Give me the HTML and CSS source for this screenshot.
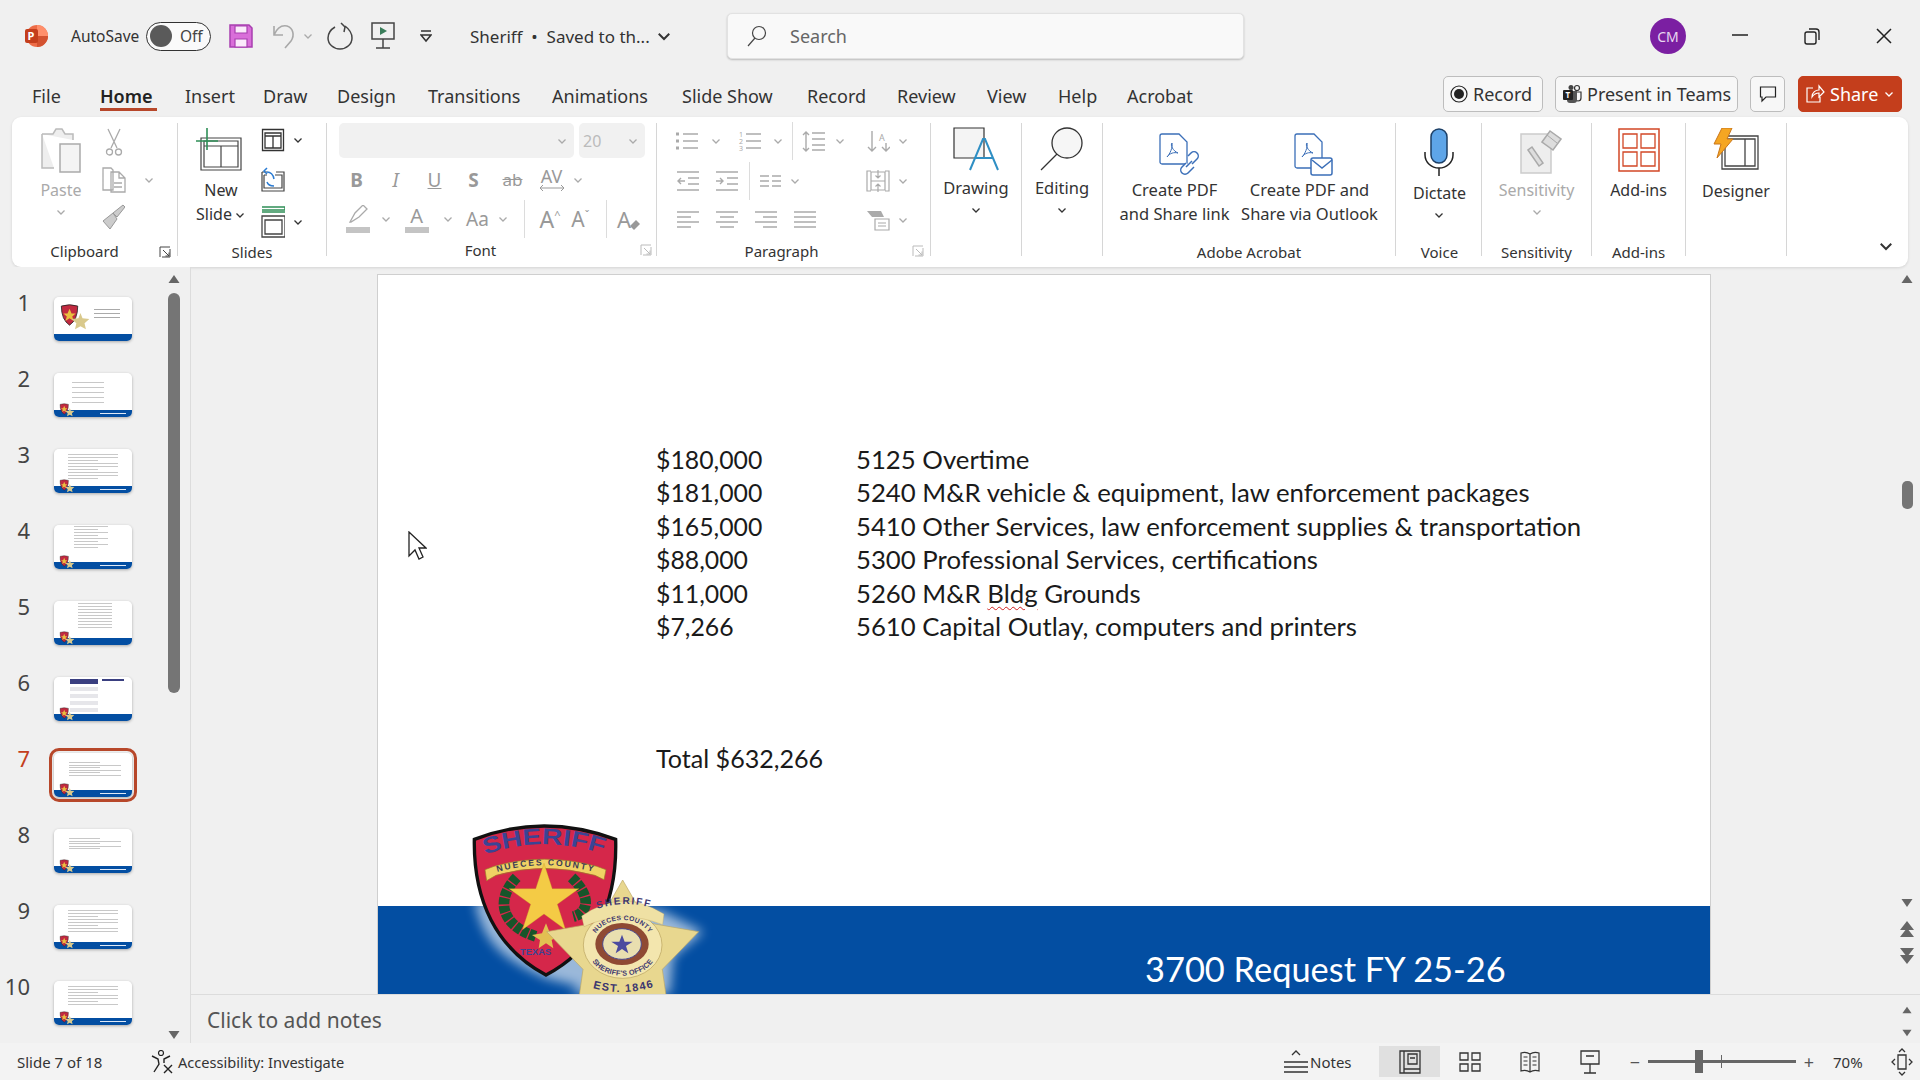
FILE: index.html
```html
<!DOCTYPE html>
<html lang="en">
<head>
<meta charset="utf-8">
<title>Sheriff - PowerPoint</title>
<link rel="stylesheet" href="styles.css">
</head>
<body>
<svg class="defs" aria-hidden="true">
  <symbol id="chev" viewBox="0 0 12 12"><path d="M2.5 4.5 6 8l3.5-3.5" fill="none" stroke="currentColor" stroke-width="1.3"/></symbol>
  <symbol id="launch" viewBox="0 0 12 12"><path d="M1 11V1h10M11 3v8H3M4 4l6 6M6.500 10H10V6.500" fill="none" stroke="currentColor" stroke-width="1"/></symbol>
  <symbol id="bullets" viewBox="0 0 24 24"><g fill="none" stroke="currentColor" stroke-width="1.500"><path d="M8 5h15M8 12h15M8 19h15"/><path d="M1 5h3M1 12h3M1 19h3" stroke-width="3"/></g></symbol>
  <symbol id="linesp" viewBox="0 0 24 24"><path d="M10 4h13M10 10h13M10 16h13M10 21h13M4 3v19M1 6l3-3 3 3M1 19l3 3 3-3" fill="none" stroke="currentColor" stroke-width="1.400"/></symbol>
  <symbol id="outdent" viewBox="0 0 24 24"><path d="M1 3h22M12 9h11M12 15h11M1 21h22M9 12H2M5 9l-3 3 3 3" fill="none" stroke="currentColor" stroke-width="1.400"/></symbol>
  <symbol id="indent" viewBox="0 0 24 24"><path d="M1 3h22M12 9h11M12 15h11M1 21h22M1 12h7M5 9l3 3-3 3" fill="none" stroke="currentColor" stroke-width="1.400"/></symbol>
  <symbol id="cols" viewBox="0 0 24 24"><path d="M2 7h9M14 7h9M2 12h9M14 12h9M2 17h9M14 17h9" fill="none" stroke="currentColor" stroke-width="1.400"/></symbol>
  <symbol id="aligntext" viewBox="0 0 24 24"><path d="M5 2H1v20h4M19 2h4v20h-4M5 3h14v18H5zM12 1v8M9.500 6.500 12 9l2.500-2.500M12 23v-8M9.500 17.500 12 15l2.500 2.500M5 12h14" fill="none" stroke="currentColor" stroke-width="1.200"/></symbol>
  <symbol id="smart" viewBox="0 0 24 24"><path d="M1 3h14l3 6H6z" fill="currentColor"/><path d="M9 11h14v11H9zM12 15h8M12 18h8" fill="#fff" stroke="currentColor" stroke-width="1.200"/></symbol>
  <symbol id="al" viewBox="0 0 24 24"><path d="M1 4h22M1 9h14M1 14h22M1 19h14" fill="none" stroke="currentColor" stroke-width="1.500"/></symbol>
  <symbol id="ac" viewBox="0 0 24 24"><path d="M1 4h22M5 9h14M1 14h22M5 19h14" fill="none" stroke="currentColor" stroke-width="1.500"/></symbol>
  <symbol id="ar" viewBox="0 0 24 24"><path d="M1 4h22M9 9h14M1 14h22M9 19h14" fill="none" stroke="currentColor" stroke-width="1.500"/></symbol>
  <symbol id="aj" viewBox="0 0 24 24"><path d="M1 4h22M1 9h22M1 14h22M1 19h22" fill="none" stroke="currentColor" stroke-width="1.500"/></symbol>
  <symbol id="up" viewBox="0 0 12 12"><path d="M6 2 11.500 10H.5z" fill="currentColor"/></symbol>
  <symbol id="down" viewBox="0 0 12 12"><path d="M6 10 11.500 2H.5z" fill="currentColor"/></symbol>
  <symbol id="layout" viewBox="0 0 24 24"><path d="M1.500 1.500h21v21h-21zM4 5h16v15H4zM4 8h16M12 8v12" fill="none" stroke="currentColor" stroke-width="1.300"/></symbol>
  <symbol id="mini" viewBox="0 0 22 20">
    <path d="M1 2Q7 0 13 2 13 12 7 16 1 12 1 2Z" fill="#c22a40" stroke="#222" stroke-width=".6"/>
    <path d="M7 4l1.500 3.500h3l-2.500 2.200 1 3.300L7 11l-3 2 1-3.300-2.500-2.200h3z" fill="#e9bf3f"/>
    <path d="M15 7l1.500 4 5 .5-3.500 3 1 4.500-4-2.300L11 19l1-4.500-3.500-3 5-.5z" fill="#d9c98c"/>
  </symbol>
</svg>

<div class="app">
  <header class="titlebar">
    <svg class="t-logo" width="24" height="24" viewBox="0 0 24 24"><circle cx="13" cy="12" r="11" fill="#ed6c47"/><path d="M13 1a11 11 0 0 1 11 11H13z" fill="#ff8f6b"/><path d="M13 12h11a11 11 0 0 1-11 11z" fill="#d35230"/><rect x="1" y="5" width="13" height="14" rx="2" fill="#c43e1c"/><text x="3.500" y="16" font-size="11" font-weight="700" fill="#fff" font-family="Noto Sans">P</text></svg>
    <span class="t-autosave">AutoSave</span>
    <span class="toggle"><i class="knob"></i><b class="toggle-text">Off</b></span>
    <svg class="t-save" width="24" height="24" viewBox="0 0 24 24"><path d="M1 1h19l3 3v19H1z" fill="#d96ed9" stroke="#a83fb0" stroke-width="1.500"/><path d="M6 2h12v7H6zM6 15h12v8H6z" fill="#fbeafb" stroke="#a83fb0" stroke-width="1.200"/></svg>
    <svg class="t-undo" width="24" height="26" viewBox="0 0 24 26"><path d="M2 3v9h9M2 12C5 5 10 2 15 3c6 2 8 9 4 15l-6 7" fill="none" stroke="#a8a8a8" stroke-width="1.600"/></svg>
    <svg class="t-chev c-dis" width="12" height="12"><use href="#chev"/></svg>
    <svg class="t-redo" width="26" height="28" viewBox="0 0 26 28"><path d="M8 5C3 8 1 12 1 16a12 11 0 0 0 24 0c0-5-3-9-7-12M14 1l4 4-1 5" fill="none" stroke="#444" stroke-width="1.500"/></svg>
    <svg class="t-present" width="24" height="28" viewBox="0 0 24 28"><path d="M1 1h22v16H1zM12 17v9M5 26h14" fill="none" stroke="#444" stroke-width="1.500"/><path d="M9 5l7 4-7 4z" fill="#3a7d5a"/></svg>
    <svg class="t-qat" width="12" height="14" viewBox="0 0 12 14"><path d="M1 2h10M1 6h10L6 12z" fill="none" stroke="#333" stroke-width="1.500"/></svg>
    <span class="t-doc">Sheriff&nbsp; •&nbsp; Saved to th...</span>
    <svg class="t-docchev" width="18" height="18" viewBox="0 0 12 12"><use href="#chev"/></svg>
    <div class="search">
      <svg width="20" height="22" viewBox="0 0 20 22"><circle cx="12" cy="8" r="6.500" fill="none" stroke="#444" stroke-width="1.200"/><path d="M8 13 1 21" stroke="#444" stroke-width="1.200"/></svg>
      <span class="search-text">Search</span>
    </div>
    <span class="avatar">CM</span>
    <svg class="t-min" width="18" height="18" viewBox="0 0 18 18"><path d="M1 8h16" stroke="#222" stroke-width="1.500"/></svg>
    <svg class="t-rest" width="18" height="18" viewBox="0 0 18 18"><rect x="2" y="5" width="11" height="12" rx="2" fill="none" stroke="#222" stroke-width="1.400"/><path d="M6 2h7a3 3 0 0 1 3 3v8" fill="none" stroke="#222" stroke-width="1.400"/></svg>
    <svg class="t-close" width="18" height="18" viewBox="0 0 18 18"><path d="M2 2l14 14M16 2 2 16" stroke="#222" stroke-width="1.500"/></svg>
  </header>

  <nav class="tabs">
    <div class="tablist">
      <span class="tab">File</span>
      <span class="tab tab-on">Home</span>
      <span class="tab">Insert</span>
      <span class="tab">Draw</span>
      <span class="tab">Design</span>
      <span class="tab">Transitions</span>
      <span class="tab">Animations</span>
      <span class="tab">Slide Show</span>
      <span class="tab">Record</span>
      <span class="tab">Review</span>
      <span class="tab">View</span>
      <span class="tab">Help</span>
      <span class="tab">Acrobat</span>
    </div>
    <div class="actions">
      <span class="act act-rec"><svg width="18" height="18" viewBox="0 0 18 18"><circle cx="9" cy="9" r="8" fill="none" stroke="#222" stroke-width="1.200"/><circle cx="9" cy="9" r="5" fill="#222"/></svg>Record</span>
      <span class="act act-teams"><svg width="20" height="20" viewBox="0 0 20 20"><circle cx="15" cy="4" r="2.500" fill="none" stroke="#333" stroke-width="1.200"/><circle cx="9" cy="3.500" r="2.500" fill="#444"/><path d="M13 8h6v6a3 3 0 0 1-6 0z" fill="none" stroke="#333" stroke-width="1.200"/><path d="M5 7h10v9a3 3 0 0 1-3 3H8a3 3 0 0 1-3-3z" fill="#555"/><rect x="1" y="6" width="10" height="10" rx="1" fill="#222"/><text x="3.500" y="14" font-size="8" font-weight="700" fill="#fff" font-family="Noto Sans">T</text></svg>Present in Teams</span>
      <span class="act act-cmt"><svg width="18" height="18" viewBox="0 0 18 18"><path d="M1.500 2h15v10H7l-4 4v-4H1.500z" fill="none" stroke="#222" stroke-width="1.200"/></svg></span>
      <span class="act act-share"><svg width="20" height="20" viewBox="0 0 20 20"><path d="M8 4H2v14h13v-5M7 13c0-5 4-7 7-7V2l5 6-5 5V9c-3 0-5 1-7 4z" fill="none" stroke="#fff" stroke-width="1.200"/></svg>Share<svg class="share-chev" width="12" height="12"><use href="#chev"/></svg></span>
    </div>
  </nav>

  <section class="ribbon">
    <div class="group g-clip">
      <div class="body">
        <div class="big big-paste dis">
          <svg width="42" height="46" viewBox="0 0 42 46"><path d="M2 6h11l3-5h6l3 5h8v6M2 6v34h12" fill="#eee" stroke="#bbb" stroke-width="1.500"/><rect x="20" y="16" width="20" height="28" fill="#f4f4f4" stroke="#aaa" stroke-width="1.500"/></svg>
          <span class="big-label">Paste</span>
          <svg class="big-chev" width="12" height="12"><use href="#chev"/></svg>
        </div>
        <div class="stack dis">
          <svg class="ico-cut" width="18" height="28" viewBox="0 0 18 28"><path d="M3 1l9 19M15 1 6 20" fill="none" stroke="currentColor" stroke-width="1.300"/><circle cx="4.500" cy="24" r="3" fill="none" stroke="currentColor" stroke-width="1.300"/><circle cx="13.500" cy="24" r="3" fill="none" stroke="currentColor" stroke-width="1.300"/></svg>
          <div class="stack-row"><svg width="26" height="28" viewBox="0 0 26 28"><path d="M2 2h8l2 2v20H2zM10 6h8l6 6v14H10zM18 6v6h6M13 17h8M13 21h8" fill="#fff" stroke="currentColor" stroke-width="1.300"/></svg><svg class="sm-chev" width="12" height="12"><use href="#chev"/></svg></div>
          <svg width="24" height="26" viewBox="0 0 24 26"><path d="M22 1l2 2-8 10-4-4zM12 9 2 17l7 8 7-10z" fill="#ccc" stroke="#999" stroke-width="1"/></svg>
        </div>
      </div>
      <div class="glabel with-launch lbl-clip"><span>Clipboard</span><svg class="launch launch-dark" width="12" height="12"><use href="#launch"/></svg></div>
    </div>

    <div class="group g-slides">
      <div class="body">
        <div class="big big-new">
          <svg class="ico-new" width="46" height="44" viewBox="0 0 46 44"><path d="M5 11h40v32H5zM8 14h34v26H8zM8 19h34M25 19v21" fill="#fff" stroke="#444" stroke-width="1.200"/><path d="M11 1v22M0 14h22" stroke="#2f8f57" stroke-width="1.600"/></svg>
          <span class="big-label">New<br>Slide<svg class="inline-chev" width="12" height="12"><use href="#chev"/></svg></span>
        </div>
        <div class="stack stack-slides">
          <div class="stack-row"><svg width="24" height="24"><use href="#layout"/></svg><svg class="sm-chev" width="12" height="12"><use href="#chev"/></svg></div>
          <svg width="24" height="26" viewBox="0 0 24 26"><path d="M1 6h5M15 6h8v19H1V6M3 9h3M14 9h7v13H3V9" fill="none" stroke="#444" stroke-width="1.200"/><path d="M13 13C12 8 9 6 6 6M6 2 3 5l3 3M6 16c1 3 4 4 7 4" fill="none" stroke="#2b7cd3" stroke-width="1.500"/></svg>
          <div class="stack-row"><svg width="24" height="32" viewBox="0 0 24 32"><path d="M1 1h23v3H1M1 6h23" fill="none" stroke="#2f8f57" stroke-width="1.500"/><path d="M1 10h23v21H1zM4 14h17v14H4z" fill="none" stroke="#444" stroke-width="1.300"/></svg><svg class="sm-chev" width="12" height="12"><use href="#chev"/></svg></div>
        </div>
      </div>
      <div class="glabel">Slides</div>
    </div>

    <div class="group g-font dis">
      <div class="font-boxes"><span class="fbox fname"><svg width="12" height="12"><use href="#chev"/></svg></span><span class="fbox fsize"><i class="fsize-val">20</i><svg width="12" height="12"><use href="#chev"/></svg></span></div>
      <div class="fmt-row fmt-2">
        <b class="fch fch-b">B</b><i class="fch">I</i><u class="fch">U</u><b class="fch fch-s">S</b><s class="fch fch-ab">ab</s>
        <span class="fch fch-av">AV<svg width="26" height="8" viewBox="0 0 26 8"><path d="M1 4h24M4 1 1 4l3 3M22 1l3 3-3 3" fill="none" stroke="currentColor"/></svg></span>
        <svg width="12" height="12"><use href="#chev"/></svg>
      </div>
      <div class="fmt-row fmt-3">
        <span class="swatch"><svg width="24" height="18" viewBox="0 0 24 18"><path d="M4 17 9 8l8-8 4 4-8 8-8 5z" fill="none" stroke="currentColor" stroke-width="1.300"/></svg><i class="bar"></i></span>
        <svg width="12" height="12"><use href="#chev"/></svg>
        <span class="swatch"><span class="fa">A</span><i class="bar"></i></span>
        <svg width="12" height="12"><use href="#chev"/></svg>
        <span class="fch-aa">Aa</span>
        <svg width="12" height="12"><use href="#chev"/></svg>
        <i class="vsep"></i>
        <span class="fch-grow">A<sup>^</sup></span>
        <span class="fch-shrink">A<sup>ˇ</sup></span>
        <i class="vsep"></i>
        <span class="fch-clear">A<svg class="eraser" width="12" height="12" viewBox="0 0 12 12"><path d="M1 7l6-6 4 4-6 6z" fill="currentColor"/></svg></span>
      </div>
      <div class="glabel with-launch lbl-font"><span>Font</span><svg class="launch" width="12" height="12"><use href="#launch"/></svg></div>
    </div>

    <div class="group g-para dis">
      <div class="para-row para-1">
        <div class="p-left pl-1">
          <svg width="24" height="24"><use href="#bullets"/></svg>
          <svg width="12" height="12"><use href="#chev"/></svg>
          <svg width="24" height="24" viewBox="0 0 24 24"><path d="M9 5h15M9 12h15M9 19h15" fill="none" stroke="currentColor" stroke-width="1.500"/><g fill="currentColor" font-size="7" font-family="Noto Sans"><text x="2" y="8">1</text><text x="2" y="15">2</text><text x="2" y="22">3</text></g></svg>
          <svg width="12" height="12"><use href="#chev"/></svg>
          <i class="vsep"></i>
          <svg width="24" height="24"><use href="#linesp"/></svg>
          <svg width="12" height="12"><use href="#chev"/></svg>
        </div>
        <div class="p-right">
          <svg width="24" height="24" viewBox="0 0 24 24"><path d="M6 2v20M2 18l4 4 4-4M20 14v8M16 18l4 4 4-4" fill="none" stroke="currentColor" stroke-width="1.400"/><text x="13" y="12" font-size="9" fill="currentColor" font-family="Noto Sans">A</text></svg>
          <svg width="12" height="12"><use href="#chev"/></svg>
        </div>
      </div>
      <div class="para-row para-2">
        <div class="p-left pl-2">
          <svg width="24" height="24"><use href="#outdent"/></svg>
          <svg width="24" height="24"><use href="#indent"/></svg>
          <i class="vsep"></i>
          <svg width="24" height="24"><use href="#cols"/></svg>
          <svg width="12" height="12"><use href="#chev"/></svg>
        </div>
        <div class="p-right">
          <svg width="24" height="24"><use href="#aligntext"/></svg>
          <svg width="12" height="12"><use href="#chev"/></svg>
        </div>
      </div>
      <div class="para-row para-3">
        <div class="p-left pl-3">
          <svg width="24" height="24"><use href="#al"/></svg>
          <svg width="24" height="24"><use href="#ac"/></svg>
          <svg width="24" height="24"><use href="#ar"/></svg>
          <svg width="24" height="24"><use href="#aj"/></svg>
        </div>
        <div class="p-right">
          <svg width="26" height="24"><use href="#smart"/></svg>
          <svg width="12" height="12"><use href="#chev"/></svg>
        </div>
      </div>
      <div class="glabel with-launch lbl-para"><span>Paragraph</span><svg class="launch" width="12" height="12"><use href="#launch"/></svg></div>
    </div>

    <div class="group g-draw">
      <div class="body center">
        <div class="big big-draw">
          <svg width="46" height="44" viewBox="0 0 46 44"><path d="M1 1h30v30H1z" fill="#f4f4f4" stroke="#333" stroke-width="1.200"/><path d="M17 43 30 12h2l13 31M22 31h18" fill="none" stroke="#2f8fc4" stroke-width="2"/></svg>
          <span class="big-label">Drawing</span>
          <svg class="big-chev" width="12" height="12"><use href="#chev"/></svg>
        </div>
      </div>
    </div>

    <div class="group g-edit">
      <div class="body center">
        <div class="big big-draw">
          <svg width="46" height="44" viewBox="0 0 46 44"><circle cx="28" cy="16" r="15" fill="#f6f6f6" stroke="#333" stroke-width="1.300"/><path d="M18 27 2 43" stroke="#333" stroke-width="1.300"/></svg>
          <span class="big-label">Editing</span>
          <svg class="big-chev" width="12" height="12"><use href="#chev"/></svg>
        </div>
      </div>
    </div>

    <div class="group g-acro">
      <div class="body acro-body">
        <div class="big big-acro">
          <svg class="ico-acro" width="40" height="44" viewBox="0 0 40 44"><path d="M3 1h17l8 8v22H3a2 2 0 0 1-2-2V3a2 2 0 0 1 2-2z" fill="#fff" stroke="#3b6fb8" stroke-width="1.300"/><path d="M8 24c3-3 6-10 5-14-2 2 1 8 6 10-4-1-8 0-11 4z" fill="none" stroke="#3b6fb8"/><path d="M29 23l3-3a4 4 0 0 1 6 6l-5 5M27 30l-4 4a4 4 0 0 0 6 6l6-6M27 34l6-6" fill="#fff" stroke="#3b6fb8" stroke-width="1.500"/></svg>
          <span class="big-label">Create PDF<br>and Share link</span>
        </div>
        <div class="big big-acro">
          <svg class="ico-acro" width="40" height="44" viewBox="0 0 40 44"><path d="M3 1h17l8 8v26H3a2 2 0 0 1-2-2V3a2 2 0 0 1 2-2z" fill="#fff" stroke="#3b6fb8" stroke-width="1.300"/><path d="M8 24c3-3 6-10 5-14-2 2 1 8 6 10-4-1-8 0-11 4z" fill="none" stroke="#3b6fb8"/><rect x="17" y="25" width="21" height="17" rx="2" fill="#fff" stroke="#3b6fb8" stroke-width="1.500"/><path d="M18 27l10 8 10-8" fill="none" stroke="#3b6fb8" stroke-width="1.500"/></svg>
          <span class="big-label">Create PDF and<br>Share via Outlook</span>
        </div>
      </div>
      <div class="glabel">Adobe Acrobat</div>
    </div>

    <div class="group g-voice">
      <div class="body center">
        <div class="big big-voice">
          <svg width="30" height="48" viewBox="0 0 30 48"><rect x="7" y="1" width="16" height="34" rx="8" fill="#5ea5e8" stroke="#1c3f66" stroke-width="1.500"/><path d="M1 24v3a14 13 0 0 0 28 0v-3M15 40v8" fill="none" stroke="#222" stroke-width="1.500"/></svg>
          <span class="big-label">Dictate</span>
          <svg class="big-chev" width="12" height="12"><use href="#chev"/></svg>
        </div>
      </div>
      <div class="glabel">Voice</div>
    </div>

    <div class="group g-sens">
      <div class="body center">
        <div class="big big-sens dis">
          <svg class="ico-sens" width="42" height="46" viewBox="0 0 42 46"><path d="M1 6h30v39H1z" fill="#eee" stroke="#ccc" stroke-width="1.500"/><path d="M8 22 19 38l4-3L12 19zM22 14 30 3l11 8-8 11z" fill="#ddd" stroke="#aaa" stroke-width="1.500"/><path d="M27 7l10 8" stroke="#aaa"/></svg>
          <span class="big-label">Sensitivity</span>
          <svg class="big-chev" width="12" height="12"><use href="#chev"/></svg>
        </div>
      </div>
      <div class="glabel">Sensitivity</div>
    </div>

    <div class="group g-add">
      <div class="body center">
        <div class="big big-add">
          <svg width="42" height="44" viewBox="0 0 42 44"><path d="M1 1h40v42H1z" fill="#fff" stroke="#d24726" stroke-width="1.500"/><path d="M5 6h14v14H5zM23 6h14v14H23zM5 24h14v14H5zM23 24h14v14H23z" fill="#fff" stroke="#d24726" stroke-width="1.300"/></svg>
          <span class="big-label">Add-ins</span>
        </div>
      </div>
      <div class="glabel">Add-ins</div>
    </div>

    <div class="group g-design">
      <div class="body center">
        <div class="big big-design">
          <svg width="46" height="42" viewBox="0 0 46 42"><path d="M9 8h36v33H9zM12 11h30v27H12zM32 11v27" fill="#fff" stroke="#444" stroke-width="1.300"/><path d="M9 0h10l-5 11h6L4 30l4-14H1z" fill="#f5a623" stroke="#c9761a"/></svg>
          <span class="big-label">Designer</span>
        </div>
      </div>
    </div>

    <svg class="collapse" width="18" height="18" viewBox="0 0 12 12"><use href="#chev"/></svg>
  </section>

  <main class="main">
    <aside class="pane">
      <div class="thumbs">
        <div class="trow"><span class="tnum">1</span><div class="thumb thumb-cover"><svg class="cover-logo" width="30" height="28" viewBox="0 0 22 20"><use href="#mini"/></svg><div class="cover-lines"><i></i><i></i><i></i></div></div></div>
        <div class="trow"><span class="tnum">2</span><div class="thumb"><div class="tlines tl-2"><i></i><i></i><i></i><i></i><i></i></div><i class="t-caption"></i><svg class="tlogo" width="16" height="14" viewBox="0 0 22 20"><use href="#mini"/></svg></div></div>
        <div class="trow"><span class="tnum">3</span><div class="thumb"><div class="tlines tl-3"><i></i><i></i><i></i><i></i><i></i><i></i><i></i><i></i><i></i></div><i class="t-caption"></i><svg class="tlogo" width="16" height="14" viewBox="0 0 22 20"><use href="#mini"/></svg></div></div>
        <div class="trow"><span class="tnum">4</span><div class="thumb"><div class="tlines tl-4"><i></i><i></i><i></i><i></i><i></i><i></i><i></i><i></i></div><i class="t-caption"></i><svg class="tlogo" width="16" height="14" viewBox="0 0 22 20"><use href="#mini"/></svg></div></div>
        <div class="trow"><span class="tnum">5</span><div class="thumb"><div class="tlines tl-5"><i></i><i></i><i></i><i></i><i></i><i></i><i></i><i></i><i></i></div><svg class="tlogo" width="16" height="14" viewBox="0 0 22 20"><use href="#mini"/></svg></div></div>
        <div class="trow"><span class="tnum">6</span><div class="thumb"><div class="tl-6"><i class="navy"></i><i></i><i></i><i></i><i></i></div><i class="tl-6b"></i><svg class="tlogo" width="16" height="14" viewBox="0 0 22 20"><use href="#mini"/></svg></div></div>
        <div class="trow"><span class="tnum tnum-on">7</span><div class="thumb thumb-on"><div class="tlines tl-7"><i></i><i></i><i></i><i></i><i></i><i></i></div><i class="t-caption"></i><svg class="tlogo" width="16" height="14" viewBox="0 0 22 20"><use href="#mini"/></svg></div></div>
        <div class="trow"><span class="tnum">8</span><div class="thumb"><div class="tlines tl-7"><i></i><i></i><i></i><i></i><i></i></div><i class="t-caption"></i><svg class="tlogo" width="16" height="14" viewBox="0 0 22 20"><use href="#mini"/></svg></div></div>
        <div class="trow"><span class="tnum">9</span><div class="thumb"><div class="tlines tl-3"><i></i><i></i><i></i><i></i><i></i><i></i><i></i><i></i></div><i class="t-caption"></i><svg class="tlogo" width="16" height="14" viewBox="0 0 22 20"><use href="#mini"/></svg></div></div>
        <div class="trow"><span class="tnum tnum-10">10</span><div class="thumb"><div class="tlines tl-3"><i></i><i></i><i></i><i></i><i></i><i></i><i></i></div><i class="t-caption"></i><svg class="tlogo" width="16" height="14" viewBox="0 0 22 20"><use href="#mini"/></svg></div></div>
      </div>
      <div class="pane-scroll">
        <svg width="14" height="12"><use href="#up"/></svg>
        <i class="pane-thumb"></i>
        <svg class="push-down" width="14" height="12"><use href="#down"/></svg>
      </div>
    </aside>

    <div class="editor">
      <div class="stage-row">
        <div class="stage">
          <article class="slide">
            <div class="slide-rows">
              <div class="srow"><span class="amt">$180,000</span><span>5125 Overtime</span></div>
              <div class="srow"><span class="amt">$181,000</span><span>5240 M&amp;R vehicle &amp; equipment, law enforcement packages</span></div>
              <div class="srow"><span class="amt">$165,000</span><span>5410 Other Services, law enforcement supplies &amp; transportation</span></div>
              <div class="srow"><span class="amt">$88,000</span><span>5300 Professional Services, certifications</span></div>
              <div class="srow"><span class="amt">$11,000</span><span>5260 M&amp;R <span class="spell">Bldg</span> Grounds</span></div>
              <div class="srow"><span class="amt">$7,266</span><span>5610 Capital Outlay, computers and printers</span></div>
            </div>
            <div class="total">Total $632,266</div>
            <div class="band">3700 Request FY 25-26</div>
            <svg class="crest" width="300" height="194" viewBox="0 0 900 582">
              <defs>
                <filter id="glow" x="-30%" y="-30%" width="160%" height="160%"><feGaussianBlur stdDeviation="16"/></filter>
                <path id="a1" d="M135 164Q310 102 495 164"/>
                <path id="a2" d="M172 216Q310 176 462 216"/>
                <path id="a3" d="M438 340Q548 288 668 334"/>
                <path id="a4" d="M460 428A88 68 0 0 1 636 428"/>
                <path id="a5" d="M448 455A100 72 0 0 0 648 455"/>
                <path id="a6" d="M440 558Q548 596 662 554"/>
              </defs>
              <path d="M103 300C130 440 200 480 318 535L420 560 390 582H430L690 582 700 470 790 395 660 330H440Z" fill="#fff" opacity=".6" filter="url(#glow)"/>
              <path d="M103 118Q310 38 527 118C532 300 470 445 318 525 168 445 100 300 103 118Z" fill="#d5274a" stroke="#111" stroke-width="10"/>
              <text font-size="68" font-weight="700" fill="#3b4494" textLength="362" lengthAdjust="spacingAndGlyphs"><textPath href="#a1">SHERIFF</textPath></text>
              <path d="M135 209 162 199Q310 156 470 199L498 209 492 239 465 226Q310 184 168 226L140 242Z" fill="#f0d264" stroke="#9a7f25" stroke-width="2"/>
              <text font-size="26" font-weight="700" fill="#3b3b55" textLength="290"><textPath href="#a2">NUECES COUNTY</textPath></text>
              <path d="M230 232C160 305 190 380 290 410M395 232C460 295 440 340 400 350" fill="none" stroke="#17552a" stroke-width="32" stroke-dasharray="20 4"/>
              <polygon points="312,190 336.700,266 416.600,266 352,313 376.700,389 312,342 247.300,389 272,313 207.400,266 287.300,266" fill="#f4cb45" stroke="#c59b24"/>
              <polygon points="318,370 330,400 360,405 335,420 340,445 318,430 296,445 300,420 276,405 306,400" fill="#e2bf52"/>
              <text x="240" y="465" font-size="28" font-weight="700" fill="#3b4494">TEXAS</text>
              <polygon points="548,240 621.500,368 776,395 667,508 689,663 548,594 407,663 429,508 320,395 474.500,368" fill="#e8d78f" stroke="#bda864" stroke-width="2"/>
              <ellipse cx="548" cy="435" rx="118" ry="100" fill="#f3e6ae" stroke="#b8a25c" stroke-width="2"/>
              <path d="M425 348Q548 262 672 342L668 374Q548 326 432 380Z" fill="#efe1a4" stroke="#b8a25c"/>
              <text font-size="30" font-weight="700" fill="#3d3770" letter-spacing="5"><textPath href="#a3" startOffset="50%" text-anchor="middle">SHERIFF</textPath></text>
              <text font-size="20" font-weight="700" fill="#3d3770" letter-spacing="1"><textPath href="#a4" startOffset="50%" text-anchor="middle">NUECES COUNTY</textPath></text>
              <text font-size="22" font-weight="700" fill="#3d3770" letter-spacing=".5"><textPath href="#a5" startOffset="50%" text-anchor="middle">SHERIFF'S OFFICE</textPath></text>
              <ellipse cx="546" cy="432" rx="80" ry="63" fill="#8f4a33"/>
              <ellipse cx="546" cy="432" rx="58" ry="46" fill="#e9dfb0" stroke="#4b4a8f" stroke-width="3"/>
              <polygon points="546,404 554,425 578,425 558,438 565,460 546,447 527,460 534,438 514,425 538,425" fill="#4b4a9f"/>
              <text font-size="33" font-weight="700" fill="#3d3770" letter-spacing="4"><textPath href="#a6" startOffset="50%" text-anchor="middle">EST. 1846</textPath></text>
            </svg>
          </article>
        </div>
        <div class="vscroll">
          <svg width="14" height="12"><use href="#up"/></svg>
          <i class="v-thumb"></i>
          <svg class="push-down" width="14" height="12"><use href="#down"/></svg>
          <svg class="dbl" width="16" height="20" viewBox="0 0 16 20"><path d="M8 0l7 9H1zM8 7l7 9H1z" fill="#666"/></svg>
          <svg class="dbl" width="16" height="20" viewBox="0 0 16 20"><path d="M8 20l7-9H1zM8 13l7-9H1z" fill="#666"/></svg>
        </div>
      </div>
      <div class="notes">
        <span class="notes-text">Click to add notes</span>
        <div class="notes-scroll"><svg width="12" height="10"><use href="#up"/></svg><svg width="12" height="10"><use href="#down"/></svg></div>
      </div>
    </div>

    <svg class="cursor" width="20" height="30" viewBox="0 0 20 30"><path d="M2 1v24l6-6 4 9 4-2-4-9h7z" fill="#fff" stroke="#222" stroke-width="1.300"/></svg>
  </main>

  <footer class="status">
    <span class="st-slide">Slide 7 of 18</span>
    <svg class="st-acc" width="22" height="24" viewBox="0 0 22 24"><circle cx="10" cy="3" r="2.500" fill="none" stroke="#222" stroke-width="1.200"/><path d="M1 6l6 3 1 5-5 8M19 6l-6 3v4M13 15l8 8M21 15l-8 8" fill="none" stroke="#222" stroke-width="1.400"/></svg>
    <span class="st-text">Accessibility: Investigate</span>
    <div class="st-right">
      <svg width="24" height="26" viewBox="0 0 24 26"><path d="M8 6l4-4 4 4M0 13h24M0 18h24M0 23h24" fill="none" stroke="#333" stroke-width="1.300"/></svg>
      <span class="st-notes">Notes</span>
      <span class="view view-on"><svg width="22" height="24" viewBox="0 0 22 24"><path d="M1 1h20v22H1zM5 1v22M5 19h16M9 4h9v10H9zM11 8h5" fill="none" stroke="#333" stroke-width="1.300"/></svg></span>
      <span class="view"><svg width="22" height="22" viewBox="0 0 22 22"><path d="M1 2h8v7H1zM13 2h8v7h-8zM1 13h8v7H1zM13 13h8v7h-8z" fill="none" stroke="#333" stroke-width="1.300"/></svg></span>
      <span class="view"><svg width="20" height="24" viewBox="0 0 20 24"><path d="M1 3c3-1 6-1 9 1 3-2 6-2 9-1v18c-3-1-6-1-9 1-3-2-6-2-9-1zM10 4v18M3.500 7h4M3.500 11h4M3.500 15h4M12.500 7h4M12.500 11h4M12.500 15h4" fill="none" stroke="#333" stroke-width="1.200"/></svg></span>
      <span class="view"><svg width="20" height="26" viewBox="0 0 20 26"><path d="M1 2h18v13H1zM10 15v9M4 24h12M6 7h8" fill="none" stroke="#333" stroke-width="1.300"/></svg></span>
      <span class="zm">−</span>
      <div class="slider"><i class="sl-tick"></i><i class="sl-thumb"></i></div>
      <span class="zm zm-plus">+</span>
      <span class="st-pct">70%</span>
      <svg class="st-fit" width="24" height="28" viewBox="0 0 24 28"><path d="M8 7h8v14H8zM9 4l3-3 3 3M9 24l3 3 3-3M5 11l-3 3 3 3M19 11l3 3-3 3" fill="none" stroke="#333" stroke-width="1.300"/></svg>
    </div>
  </footer>
</div>
</body>
</html>
```

FILE: styles.css
```css
* { box-sizing: border-box; }
html, body { margin: 0; padding: 0; }
body { background: #f0f0f0; font-family: "Noto Sans", "Open Sans", sans-serif; color: #333; overflow: hidden; }
.defs { position: absolute; width: 0; height: 0; }
svg { flex: none; display: block; }
.app { width: 1920px; height: 1080px; display: flex; flex-direction: column; position: relative; overflow: hidden; background: #f0f0f0; }

/* title bar */
.titlebar { height: 72px; display: flex; align-items: center; padding-left: 24px; flex: none; }
.t-autosave { margin-left: 23px; width: 66px; font-size: 15.500px; white-space: nowrap; color: #333; }
.toggle { margin-left: 9px; width: 65px; height: 29px; border: 1px solid #333; border-radius: 15px; display: flex; align-items: center; padding-left: 3px; background: #fafafa; }
.knob { width: 22px; height: 22px; border-radius: 50%; background: #5a5a5a; }
.toggle-text { font-weight: 400; font-size: 15.500px; margin-left: 8px; color: #444; }
.t-save { margin-left: 18px; }
.t-undo { margin-left: 19px; }
.t-chev { margin-left: 6px; }
.c-dis { color: #aaa; }
.t-redo { margin-left: 13px; }
.t-present { margin-left: 18px; }
.t-qat { margin-left: 25px; }
.t-doc { margin-left: 38px; width: 176px; font-size: 17px; white-space: nowrap; color: #333; }
.t-docchev { margin-left: 9px; color: #333; }
.search { margin-left: 54px; width: 517px; height: 46px; background: #f9f9f9; border: 1px solid #e2e2e2; border-radius: 5px; box-shadow: 0 1px 2px rgba(0,0,0,.22); display: flex; align-items: center; padding-left: 19px; }
.search-text { margin-left: 23px; font-size: 18px; color: #666; }
.avatar { margin-left: 406px; width: 36px; height: 36px; border-radius: 50%; background: #7b1fa2; color: #e8d8f0; font-size: 14px; display: flex; align-items: center; justify-content: center; }
.t-min { margin-left: 45px; }
.t-rest { margin-left: 54px; }
.t-close { margin-left: 54px; }

/* tabs */
.tabs { height: 45px; display: flex; align-items: flex-start; padding-left: 32px; flex: none; }
.tablist { display: grid; grid-template-columns: 68px 85px 78px 74px 91px 124px 130px 125px 90px 90px 71px 69px auto; }
.tab { font-size: 18px; line-height: 26px; height: 39px; padding-top: 11px; color: #333; white-space: nowrap; }
.tab-on { font-weight: 600; color: #222; position: relative; }
.tab-on::after { content: ""; position: absolute; left: 0; top: 36px; width: 57px; height: 3px; background: #b7472a; }
.actions { margin-left: auto; display: flex; gap: 12px; padding: 4px 18px 0 0; }
.act { height: 36px; border: 1px solid #bdbdbd; border-radius: 5px; background: #f7f7f7; display: flex; align-items: center; font-size: 18px; color: #333; gap: 5px; white-space: nowrap; }
.act-rec { width: 100px; padding-left: 6px; }
.act-teams { width: 183px; padding-left: 6px; }
.act-cmt { width: 35px; justify-content: center; }
.act-share { width: 104px; padding-left: 6px; background: #c43e1c; border-color: #c43e1c; color: #fff; margin-left: 1px; }
.share-chev { color: #fff; }

/* ribbon */
.ribbon { margin-left: 12px; width: 1896px; height: 150px; background: #fff; border-radius: 9px; box-shadow: 0 1px 3px rgba(0,0,0,.12); padding-top: 6px; display: flex; position: relative; flex: none; }
.group { height: 133px; flex: none; border-right: 1px solid #d6d6d6; display: flex; flex-direction: column; }
.dis { color: #aaa; }
.body { height: 117px; display: flex; flex: none; }
.body.center { justify-content: center; }
.big { display: flex; flex-direction: column; align-items: center; font-size: 16px; line-height: 24px; color: #333; }
.big.dis { color: #aaa; }
.big-label { text-align: center; white-space: nowrap; }
.inline-chev { display: inline-block; vertical-align: -1px; margin-left: 2px; }
.big-chev { margin-top: 4px; }
.glabel { height: 24px; line-height: 24px; font-size: 15px; text-align: center; color: #333; flex: none; }
.with-launch { display: flex; position: relative; justify-content: center; }
.launch { position: absolute; top: 6px; color: #bbb; }
.launch-dark { color: #444; right: 6px; }

.g-clip { width: 166px; }
.lbl-clip { padding-right: 20px; line-height: 22px; }
.big-paste { margin-left: 28px; padding-top: 5px; }
.big-paste .big-label { margin-top: 5px; line-height: 22px; }
.big-paste .big-chev { margin-top: 5px; }
.stack { margin-left: 19px; display: flex; flex-direction: column; align-items: flex-start; gap: 10px; padding-top: 5px; }
.ico-cut { margin-left: 4px; }
.stack-row { display: flex; align-items: center; }
.sm-chev { margin-left: 16px; color: inherit; }

.g-slides { width: 149px; }
.big-new { margin-left: 18px; padding-top: 4px; }
.ico-new { margin-left: -4px; }
.big-new .big-label { margin-top: 7px; }
.stack-slides { margin-left: 15px; gap: 14px; padding-top: 5px; color: #333; }
.stack-slides .sm-chev { margin-left: 7px; }

.g-font { width: 330px; }
.font-boxes { display: flex; gap: 5px; padding-left: 12px; height: 35px; flex: none; }
.fbox { background: #f1f1f1; border-radius: 5px; display: flex; align-items: center; justify-content: flex-end; padding-right: 6px; }
.fname { width: 235px; }
.fsize { width: 66px; justify-content: space-between; padding-left: 4px; }
.fsize-val { font-style: normal; font-size: 16px; color: #bbb; }
.fmt-row { display: grid; align-items: center; justify-items: center; height: 39px; flex: none; }
.fmt-2 { margin-top: 2px; padding-left: 10px; grid-template-columns: repeat(6, 39px) 14px; }
.fmt-3 { padding-left: 18px; grid-template-columns: 26px 30.500px 30.500px 31px 29px 22.500px 20.500px 30px 30.500px 21.500px 22px; }
.fch { font-size: 19px; color: #999; }
.fch-ab { font-size: 17px; }
.fch-av { display: flex; flex-direction: column; align-items: center; font-size: 18px; line-height: 16px; }
.swatch { width: 24px; display: flex; flex-direction: column; align-items: center; height: 28px; }
.bar { display: block; width: 24px; height: 6px; background: #c4c4c4; margin-top: auto; }
.fa { font-size: 20px; line-height: 22px; color: #999; }
.fch-aa { font-size: 19px; color: #999; }
.vsep { display: block; width: 1px; height: 38px; background: #dcdcdc; justify-self: center; }
.fch-grow { font-size: 23px; color: #999; white-space: nowrap; }
.fch-shrink { font-size: 21px; color: #999; white-space: nowrap; }
.fch-grow sup, .fch-shrink sup { font-size: 11px; line-height: 0; }
.fch-clear { font-size: 22px; color: #999; position: relative; display: block; width: 22px; line-height: 28px; }
.eraser { position: absolute; right: -2px; bottom: 2px; }
.lbl-font { margin-top: auto; padding-right: 22px; }
.lbl-font .launch { right: 4px; }

.g-para { width: 274px; }
.para-row { display: flex; align-items: center; height: 39px; padding-left: 11px; flex: none; }
.para-1 { height: 40px; margin-top: -2px; }
.p-left { width: 192px; flex: none; display: grid; align-items: center; justify-items: center; }
.pl-1 { grid-template-columns: 38px 20px 46px 12px 16px 28px 24px; }
.pl-2 { grid-template-columns: 40px 38px 6px 36px 14px; }
.pl-3 { grid-template-columns: repeat(4, 39px); }
.p-right { display: grid; grid-template-columns: 36px 14px; align-items: center; justify-items: center; }
.lbl-para { margin-top: auto; padding-right: 24px; }
.lbl-para .launch { right: 6px; }

.g-draw { width: 91px; }
.g-edit { width: 81px; }
.big-draw { padding-top: 4px; }
.big-draw .big-label { margin-top: 5px; font-size: 16.500px; }
.big-draw .big-chev { margin-top: 4px; color: #333; }
.g-acro { width: 293px; }
.acro-body { padding-left: 4px; }
.big-acro { width: 135px; padding-top: 10px; font-size: 16.500px; }
.ico-acro { margin-left: 8px; }
.big-acro .big-label { margin-top: 1px; }
.g-voice { width: 86px; padding-left: 2px; }
.big-voice { padding-top: 5px; }
.big-voice .big-label { margin-top: 5px; }
.big-voice .big-chev { margin-top: 4px; }
.g-sens { width: 110px; }
.big-sens { padding-top: 5px; }
.ico-sens { margin-left: 8px; }
.big-sens .big-label { margin-top: 4px; }
.big-sens .big-chev { color: #aaa; }
.g-add { width: 94px; }
.big-add { padding-top: 5px; }
.big-add .big-label { margin-top: 6px; }
.g-design { width: 101px; }
.big-design { padding-top: 5px; }
.big-design .big-label { margin-top: 9px; }
.collapse { position: absolute; right: 13px; top: 120px; color: #333; }

/* main */
.main { flex: 1; display: flex; min-height: 0; position: relative; }
.pane { width: 191px; flex: none; display: flex; border-right: 1px solid #dcdcdc; background: #f0f0f0; overflow: hidden; }
.thumbs { width: 167px; flex: none; padding-top: 30px; }
.trow { height: 76px; display: flex; align-items: flex-start; }
.tnum { width: 30px; text-align: right; font-size: 22px; line-height: 22px; margin-top: -6px; color: #444; flex: none; }
.tnum-on { color: #c43e1c; }
.thumb { margin-left: 24px; width: 78px; height: 44px; background: linear-gradient(#fff 37px, #034ea2 37px); border-radius: 5px; box-shadow: 0 1px 3px rgba(0,0,0,.3); position: relative; overflow: hidden; flex: none; }
.thumb-on { outline: 3px solid #b7472a; outline-offset: 2px; }
.tlogo { position: absolute; left: 5px; top: 30px; }
.t-caption { position: absolute; left: 46px; top: 39.500px; width: 26px; height: 1px; background: #dfe9f7; }
.tlines { display: flex; flex-direction: column; gap: 2px; position: absolute; }
.tlines i { display: block; height: 1px; background: #c8c8c8; }
.tl-2 { left: 18px; top: 9px; width: 32px; gap: 4px; }
.tl-3 { left: 14px; top: 5px; width: 50px; }
.tl-4 { left: 20px; top: 1px; width: 34px; }
.tl-4 i:nth-child(2n) { width: 70%; }
.tl-3 i:nth-child(3n) { width: 60%; }
.tl-5 { left: 24px; top: 2px; width: 34px; }
.tl-7 { left: 15px; top: 9px; width: 52px; gap: 1.500px; }
.tl-7 i:nth-child(odd) { width: 60%; }
.tl-6 { position: absolute; left: 16px; top: 2px; width: 28px; display: flex; flex-direction: column; gap: 3px; }
.tl-6 i { display: block; height: 4px; background: #e6e6ea; }
.tl-6 .navy { height: 5px; background: #3a3f80; }
.tl-6b { position: absolute; left: 48px; top: 2px; width: 22px; height: 2px; background: #3a3f80; }
.cover-logo { position: absolute; left: 6px; top: 6px; }
.cover-lines { position: absolute; left: 40px; top: 12px; width: 26px; display: flex; flex-direction: column; gap: 3px; }
.cover-lines i { display: block; height: 1px; background: #aaa; }
.pane-scroll { width: 14px; flex: none; color: #666; display: flex; flex-direction: column; align-items: center; padding: 6px 0 2px; }
.pane-thumb { display: block; width: 12px; height: 400px; background: #757575; border-radius: 6px; margin-top: 8px; }
.push-down { margin-top: auto; }

.editor { flex: 1; min-width: 0; display: flex; flex-direction: column; }
.stage-row { flex: 1; min-height: 0; display: flex; }
.stage { flex: 1; min-width: 0; overflow: hidden; padding: 7px 0 0 186px; }
.slide { width: 1334px; height: 720px; background: #fff; border: 1px solid #cfcfcf; border-bottom: 0; display: flex; flex-direction: column; font-family: "Lato", "Carlito", sans-serif; color: #1a1a1a; position: relative; overflow: hidden; }
.slide-rows { padding: 168px 0 0 278px; flex: none; }
.srow { height: 33.400px; line-height: 33px; font-size: 25.750px; display: grid; grid-template-columns: 200px 1fr; white-space: nowrap; }
.amt { font-size: 24.800px; }
.spell { text-decoration: underline wavy #d02020 1px; text-underline-offset: 3px; }
.total { margin: 99px 0 0 278px; font-size: 25.100px; line-height: 33px; flex: none; }
.band { margin-top: auto; height: 88px; background: #034ea2; color: #fff; font-size: 34.400px; line-height: 42px; padding: 42px 0 0 767px; flex: none; white-space: nowrap; }
.crest { position: absolute; left: 62px; top: 525px; }
.crest text { font-family: "Liberation Sans", sans-serif; }
.vscroll { width: 20px; flex: none; color: #666; display: flex; flex-direction: column; align-items: center; padding: 6px 6px 0 0; }
.v-thumb { display: block; width: 11px; height: 28px; background: #757575; border-radius: 5px; margin-top: 196px; }
.vscroll .push-down { margin-bottom: 12px; }
.dbl { margin-bottom: 3px; }
.dbl:last-child { margin-bottom: 30px; }
.notes { height: 49px; flex: none; border-top: 1px solid #dcdcdc; display: flex; align-items: center; padding-left: 16px; font-size: 21px; color: #555; position: relative; }
.notes-text { padding-top: 2px; }
.notes-scroll { margin-left: auto; width: 20px; padding: 4px 6px 0 0; color: #666; display: flex; flex-direction: column; align-items: center; gap: 13px; }
.cursor { position: absolute; left: 407px; top: 264px; }

/* status bar */
.status { height: 37px; flex: none; background: #f3f3f3; display: flex; align-items: center; padding-left: 17px; font-size: 15px; color: #333; }
.st-slide { width: 88px; white-space: nowrap; }
.st-acc { margin-left: 46px; }
.st-text { margin-left: 5px; white-space: nowrap; font-size: 14.600px; }
.st-right { margin-left: auto; display: flex; align-items: center; height: 37px; }
.st-notes { margin-left: 2px; width: 42px; }
.view { width: 61px; height: 31px; display: flex; align-items: center; justify-content: center; }
.view-on { background: #e0e0e0; margin-left: 27px; }
.view + .view { margin-left: -1px; }
.zm { width: 14px; text-align: center; font-size: 18px; color: #555; margin-left: 8px; }
.slider { width: 148px; height: 3px; background: #666; margin: 0 6px; position: relative; }
.sl-thumb { position: absolute; left: 47px; top: -10px; width: 8px; height: 23px; background: #666; }
.sl-tick { position: absolute; left: 73px; top: -5px; width: 1px; height: 13px; background: #666; }
.zm-plus { margin-left: 0; }
.st-pct { margin-left: 17px; width: 40px; white-space: nowrap; }
.st-fit { margin: 0 6px 0 17px; }
```
